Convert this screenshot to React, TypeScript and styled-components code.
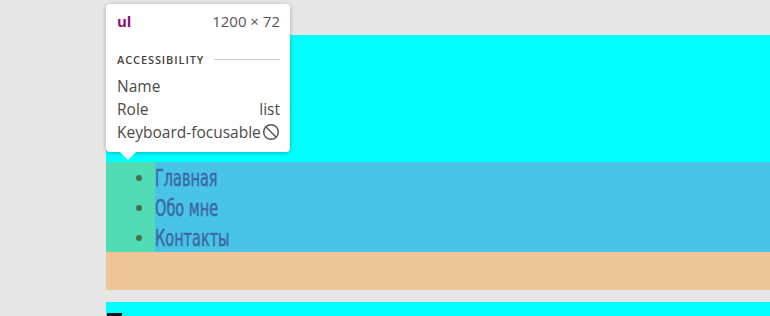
import React from "react";
import styled, { createGlobalStyle } from "styled-components";

const GlobalStyle = createGlobalStyle`
  html, body {
    margin: 0;
    padding: 0;
    background: #e6e6e6;
    overflow: hidden;
  }
`;

const Page = styled.div`
  position: relative;
  width: 770px;
  height: 316px;
  overflow: hidden;
  padding-top: 35px;
  box-sizing: border-box;
`;

const Column = styled.div`
  margin-left: 106px;
  width: 1200px;
`;

const Header = styled.div`
  height: 127px;
  background: #00ffff;
`;

const Nav = styled.ul`
  margin: 0;
  padding: 0 0 0 49px;
  height: 90px;
  background: linear-gradient(90deg, #52dcb6 0 49px, #4ac4e5 49px);
  list-style: disc;
  box-sizing: border-box;
`;

const Item = styled.li`
  height: 30px;
  line-height: 30px;
  color: #44704c;
  font-size: 14px;

  &::marker {
    font-size: 21px;
  }
`;

const ItemText = styled.span`
  display: inline-block;
  font-family: "DejaVu Sans Condensed", "DejaVu Sans", sans-serif;
  font-size: 23px;
  line-height: 26px;
  font-weight: 400;
  font-stretch: condensed;
  color: #3b69a2;
  transform: scaleX(0.7);
  transform-origin: left center;
  white-space: nowrap;
  vertical-align: top;
  -webkit-text-stroke: 0.5px #3b69a2;
`;

const MarginBand = styled.div`
  height: 38px;
  background: #efc597;
`;

const Gap = styled.div`
  height: 12px;
`;

const Section = styled.div`
  height: 40px;
  background: #00ffff;
  padding-top: 11px;
  padding-left: 1px;
  box-sizing: border-box;
`;

const Heading = styled.div`
  width: 15px;
  height: 14px;
  background: #111;
`;

const Tooltip = styled.div`
  position: absolute;
  left: 106px;
  top: 4px;
  width: 184px;
  height: 148px;
  box-sizing: border-box;
  background: #fff;
  border-radius: 4px;
  box-shadow: 0 1px 4px rgba(0, 0, 0, 0.28);
  padding: 7px 10px 0 11px;
  font-family: "Open Sans", "Noto Sans", sans-serif;
  color: #444;

  &::after {
    content: "";
    position: absolute;
    left: 14px;
    bottom: -8px;
    border-left: 8px solid transparent;
    border-right: 8px solid transparent;
    border-top: 8px solid #fff;
  }
`;

const TopRow = styled.div`
  display: flex;
  justify-content: space-between;
  align-items: baseline;
  height: 26px;
`;

const Tag = styled.span`
  color: #881280;
  font-weight: 700;
  font-size: 15px;
`;

const Size = styled.span`
  color: #555;
  font-size: 15px;
`;

const SectionTitle = styled.div`
  display: flex;
  align-items: center;
  gap: 10px;
  margin-top: 15px;
  margin-bottom: 7px;
  font-size: 11px;
  font-weight: 600;
  letter-spacing: 0.9px;
  color: #444;

  &::after {
    content: "";
    flex: 1;
    height: 1px;
    background: #c9c9c9;
  }
`;

const Row = styled.div`
  display: flex;
  justify-content: space-between;
  align-items: center;
  height: 23px;
  font-size: 15.5px;
  color: #4a4a4a;
  white-space: nowrap;
`;

const BanIcon = () => (
  <svg width="18" height="18" viewBox="0 0 16 16" fill="none" stroke="#555" strokeWidth="1.3">
    <circle cx="8" cy="8" r="6.5" />
    <line x1="3.4" y1="3.4" x2="12.6" y2="12.6" />
  </svg>
);

export default function App() {
  const items = ["Главная", "Обо мне", "Контакты"];
  return (
    <>
      <GlobalStyle />
      <Page>
        <Column>
          <Header />
          <Nav>
            {items.map((item) => (
              <Item key={item}>
                <ItemText>{item}</ItemText>
              </Item>
            ))}
          </Nav>
          <MarginBand />
          <Gap />
          <Section>
            <Heading />
          </Section>
        </Column>
        <Tooltip>
          <TopRow>
            <Tag>ul</Tag>
            <Size>1200 × 72</Size>
          </TopRow>
          <SectionTitle>ACCESSIBILITY</SectionTitle>
          <Row>
            <span>Name</span>
          </Row>
          <Row>
            <span>Role</span>
            <span>list</span>
          </Row>
          <Row>
            <span>Keyboard-focusable</span>
            <BanIcon />
          </Row>
        </Tooltip>
      </Page>
    </>
  );
}
